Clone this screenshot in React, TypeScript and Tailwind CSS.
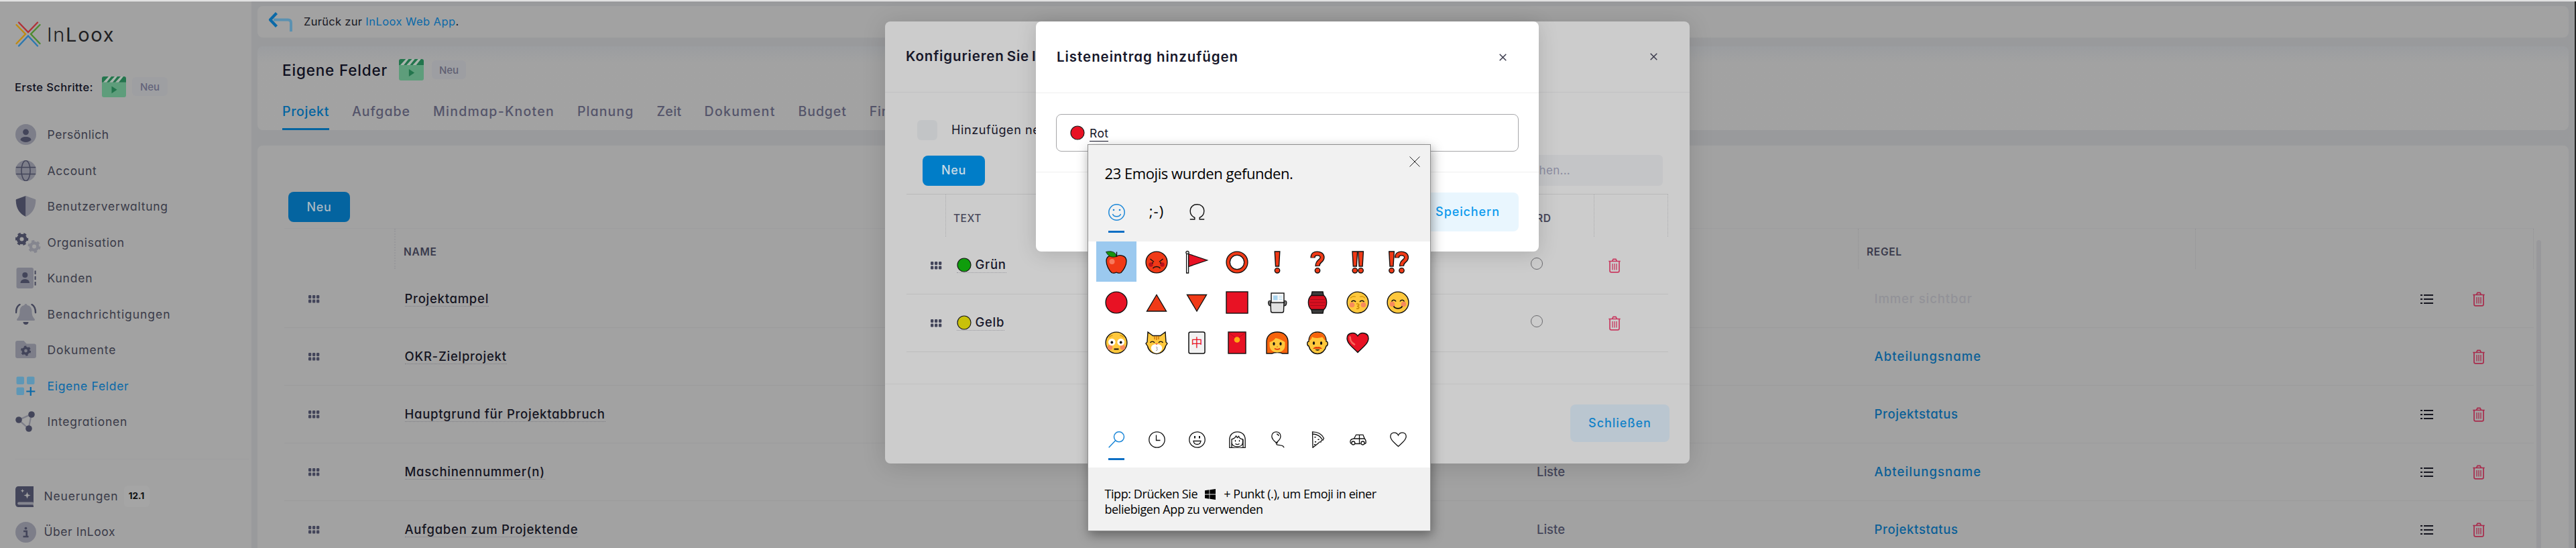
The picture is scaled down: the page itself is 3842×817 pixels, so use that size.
import type { ReactNode } from 'react';

const DARK = '#43455a';
const LIGHT = '#7d7e89';

/* ---------- Sidebar icons ---------- */

function NavIcon({ name }: { name: string }) {
  return (
    <svg width="38" height="31" viewBox="0 0 38 31" fill="none" className="shrink-0">
      {name === 'person' && (
        <>
          <circle cx="15.5" cy="15.5" r="15.5" fill={LIGHT} />
          <circle cx="15.5" cy="11.8" r="4.4" fill={DARK} />
          <path d="M7.5 23.8c0-3 3.2-4.8 8-4.8s8 1.8 8 4.8c-2 2-4.6 3.2-8 3.200s-6-1.2-8-3.200z" fill={DARK} />
        </>
      )}
      {name === 'globe' && (
        <>
          <circle cx="15.5" cy="15.5" r="15.5" fill={LIGHT} />
          <path d="M.8 10.6h29.4M.8 20.4h29.4" stroke={DARK} strokeWidth="1.5" />
          <ellipse cx="15.5" cy="15.5" rx="6.6" ry="15" stroke={DARK} strokeWidth="1.5" />
        </>
      )}
      {name === 'shield' && (
        <>
          <path d="M15.5 0L1.7 5C.8 5.4.6 6 .7 7c.3 12 5.8 20 14.8 24z" fill={DARK} />
          <path d="M15.5 0l13.800 5c.9.4 1.1 1 1 2-.3 12-5.8 20-14.8 24z" fill={LIGHT} />
        </>
      )}
      {name === 'gears' && (
        <>
          <circle cx="9.5" cy="10.5" r="5.4" stroke={DARK} strokeWidth="4.8" />
          <circle cx="9.5" cy="10.5" r="8.4" stroke={DARK} strokeWidth="2.6" strokeDasharray="4.4 4.4" strokeDashoffset="2" />
          <circle cx="28" cy="21.5" r="5.2" stroke="#85868f" strokeWidth="4.400" />
          <circle cx="28" cy="21.5" r="8.2" stroke="#85868f" strokeWidth="2.6" strokeDasharray="4.3 4.3" />
        </>
      )}
      {name === 'contacts' && (
        <>
          <rect x="1.5" y="0" width="25.5" height="31" rx="3" fill={LIGHT} />
          <circle cx="14.3" cy="11" r="4" fill={DARK} />
          <path d="M7.5 23c0-3.500 2.5-5.800 6.8-5.800S21 19.500 21 23z" fill={DARK} />
          <path d="M29.6 4.500v5.500M29.6 12.700v5.500M29.6 20.900v5.500" stroke={DARK} strokeWidth="2" />
        </>
      )}
      {name === 'bell' && (
        <>
          <path d="M15.5 0c1.3 0 2 .8 2 2 4.7.8 7 4.5 7 9 0 6 1.5 8.5 4 11.5.9 1.2.4 2.500-1 2.500h-24c-1.400 0-1.900-1.300-1-2.500 2.500-3 4-5.500 4-11.500 0-4.500 2.300-8.200 7-9 0-1.200.7-2 2-2z" fill={LIGHT} />
          <path d="M1 13C1 7.500 3 3 6.500 1M30 13c0-5.500-2-10-5.500-12" stroke={DARK} strokeWidth="2.4" strokeLinecap="round" />
          <path d="M11.500 27h8c0 2.500-1.800 4-4 4s-4-1.500-4-4z" fill={DARK} />
        </>
      )}
      {name === 'folder' && (
        <>
          <path d="M0 5c0-1.700 1.200-3 3-3h9.500l4 4.500H28c1.700 0 3 1.200 3 3V25c0 1.700-1.300 3-3 3H3c-1.800 0-3-1.300-3-3z" fill={LIGHT} />
          <circle cx="15.5" cy="17" r="4.2" stroke={DARK} strokeWidth="3.600" />
          <circle cx="15.5" cy="17" r="6.4" stroke={DARK} strokeWidth="2.400" strokeDasharray="3.35 3.35" />
        </>
      )}
      {name === 'fields' && (
        <>
          <rect x="1.5" y="1.500" width="11.5" height="11.5" rx="2" fill="#5e97b6" />
          <rect x="17" y="1.500" width="11.5" height="11.5" rx="2" fill="#5e97b6" />
          <rect x="1.5" y="17.500" width="11.5" height="11.5" rx="2" fill="#5e97b6" />
          <path d="M22.800 17v13M16.300 23.500h13" stroke="#0a69a8" strokeWidth="2.200" />
        </>
      )}
      {name === 'share' && (
        <>
          <path d="M5 13L24 4.500 19.500 26z" stroke={LIGHT} strokeWidth="2.200" />
          <circle cx="5" cy="13" r="4.800" fill={DARK} />
          <circle cx="24" cy="5" r="4.800" fill={DARK} />
          <circle cx="20" cy="26" r="4.800" fill={DARK} />
        </>
      )}
      {name === 'book' && (
        <>
          <path d="M4.500 0H27v23.500c-1 .6-1 4.500 0 5.500v2H4.500C2 31 0 29 0 26.500v-22C0 2 2 0 4.500 0z" fill={DARK} />
          <path d="M5 23.500h21v4H5c-2.500 0-2.500-4 0-4z" fill="#85868f" />
          <path d="M17.500 8.500l1.300 3.700 3.700 1.300-3.700 1.300-1.300 3.700-1.300-3.700-3.700-1.300 3.700-1.300zM10.500 4l.8 2 2 .8-2 .8-.8 2-.8-2-2-.8 2-.8z" fill="#a2a2a2" />
        </>
      )}
      {name === 'info' && (
        <>
          <circle cx="15.5" cy="15.5" r="15.5" fill={LIGHT} />
          <circle cx="15.5" cy="9.6" r="1.9" fill={DARK} />
          <path d="M12 14h4.700v8M11.500 22h8" stroke={DARK} strokeWidth="2.600" />
        </>
      )}
    </svg>
  );
}

function Clapper({ className }: { className: string }) {
  return (
    <svg viewBox="0 0 36 32" preserveAspectRatio="none" className={className}>
      <path d="M0 9h36v20a3 3 0 01-3 3H3a3 3 0 01-3-3z" fill="#5e9d7b" />
      <path d="M3 0h30a3 3 0 013 3v6H0V3a3 3 0 013-3z" fill="#23754d" />
      <path d="M10 0h4L7 9H2zM19 0h4l-7 9h-5zM28 0h4l-7 9h-5z" fill="#a9b5ad" />
      <path d="M14.500 15l8 5.500-8 5.500z" fill="#23754d" />
    </svg>
  );
}

function Handle() {
  return (
    <svg width="17" height="12" viewBox="0 0 17 12" fill="#43455a">
      {[0, 6, 12].map((x) => (
        <g key={x}>
          <rect x={x} y="0" width="4.3" height="5" rx="1.2" />
          <rect x={x} y="6.5" width="4.3" height="5" rx="1.2" />
        </g>
      ))}
    </svg>
  );
}

function Trash({ color }: { color: string }) {
  return (
    <svg width="18" height="22" viewBox="0 0 18 22" fill="none" stroke={color} strokeWidth="1.7">
      <path d="M.3 4.500h17.400M5.500 4.300l1.600-3h3.800l1.600 3" />
      <path d="M2 4.700v14c0 1.300.8 2.200 2.200 2.200h9.600c1.400 0 2.200-.9 2.200-2.200v-14" />
      <path d="M6 8v9.500M9 8v9.500M12 8v9.500" strokeWidth="1.3" />
    </svg>
  );
}

function ListIcon() {
  return (
    <svg width="19" height="16" viewBox="0 0 19 16" stroke="#15151f" strokeWidth="1.8">
      <path d="M0 2h3M0 8h3M0 14h3M5 2h14M5 8h14M5 14h14" />
    </svg>
  );
}

function CloseX() {
  return (
    <svg width="11" height="11" viewBox="0 0 11 11" stroke="#3b3b4d" strokeWidth="1.5">
      <path d="M.7.7l9.600 9.600M10.300.7L.7 10.300" />
    </svg>
  );
}

function Dot({ color }: { color: string }) {
  return (
    <svg width="22" height="22" viewBox="0 0 22 22">
      <circle cx="11" cy="11" r="10" fill={color} stroke="#1a1a1a" strokeWidth="1.2" />
    </svg>
  );
}

/* ---------- Emoji drawings ---------- */

function Bang({ x }: { x: number }) {
  return (
    <g transform={`translate(${x} 18)`} fill="#f03a17" stroke="#111" strokeWidth="1.4">
      <path d="M-3.800-16h7.600l-1.300 22h-5z" />
      <circle cy="12.3" r="3.7" />
    </g>
  );
}

function Question({ x }: { x: number }) {
  return (
    <g transform={`translate(${x} 18)`} fill="none">
      <path d="M-7-6.500C-7-11.500-4-13-.5-13S7-11.500 7-7C7-1.500-.3-2 0 6" stroke="#111" strokeWidth="7.2" />
      <path d="M-7-7.200C-7-11.500-4-13-.5-13S7-11.500 7-7C7-1.500-.3-2 0 5" stroke="#f03a17" strokeWidth="4.4" />
      <circle cy="12.3" r="3.7" fill="#f03a17" stroke="#111" strokeWidth="1.4" />
    </g>
  );
}

function Face({ fill, children }: { fill: string; children: ReactNode }) {
  return (
    <>
      <circle cx="18" cy="18" r="15.9" fill={fill} stroke="#111" strokeWidth="1.4" />
      {children}
    </>
  );
}

const emojis: ReactNode[] = [
  <>
    <path d="M18 9.500c3-2.500 14.500-3.500 15 6.500.3 6.500-4.500 14-8 17.500-2.500 1.200-4.500.8-7-.5-2.500 1.300-4.500 1.700-7 .5C7 30 3 22.500 3 16 3 6 15 7 18 9.500z" fill="#f03a17" stroke="#111" strokeWidth="1.3" />
    <path d="M2.500 2.500C9 1 17.500 1.500 18 9.500 11 11.500 6 9.500 2.500 2.500z" fill="#16930f" stroke="#111" strokeWidth=".8" />
    <path d="M18.500 9V2.500" stroke="#111" strokeWidth="1.4" />
    <circle cx="11.5" cy="17" r="4" fill="#f8795c" />
  </>,
  <Face fill="#f03a17">
    <circle cx="9.5" cy="21.500" r="3.200" fill="#b9101c" />
    <circle cx="26.5" cy="21.500" r="3.200" fill="#b9101c" />
    <path d="M8.500 13l5.500 4.500M27.500 13L22 17.500M12 18v2M24 18v2M12.500 27c2.500-3.300 8.500-3.300 11 0" stroke="#111" strokeWidth="1.5" fill="none" />
  </Face>,
  <>
    <path d="M5.500 5.500L33.500 15 5.500 24.500z" fill="#e81224" stroke="#111" strokeWidth="1.3" />
    <path d="M2.600 4v30h3V4z" fill="#fff" stroke="#111" strokeWidth="1.3" />
    <circle cx="4" cy="3.500" r="2.2" fill="#ddd" stroke="#111" strokeWidth="1.2" />
  </>,
  <>
    <circle cx="18" cy="18" r="13.3" fill="none" stroke="#111" strokeWidth="6.600" />
    <circle cx="18" cy="18" r="13.3" fill="none" stroke="#f03a17" strokeWidth="4" />
  </>,
  <Bang x={18} />,
  <Question x={18} />,
  <>
    <Bang x={13.8} />
    <Bang x={22.6} />
  </>,
  <>
    <Bang x={8.5} />
    <Question x={23.5} />
  </>,
  <circle cx="18" cy="18" r="15.9" fill="#e81224" stroke="#111" strokeWidth="1.4" />,
  <path d="M18 6.500L32.500 31h-29z" fill="#f03a17" stroke="#111" strokeWidth="1.4" />,
  <path d="M18 31L32.500 6.500h-29z" fill="#f03a17" stroke="#111" strokeWidth="1.4" />,
  <rect x="2" y="2" width="32" height="32" fill="#e81224" stroke="#111" strokeWidth="1.4" />,
  <>
    <path d="M6 15.500h24.500c2 0 2 7-1.500 7.500H7.500C4 22.500 4 15.500 6 15.500z" fill="#777" stroke="#111" strokeWidth="1.2" />
    <path d="M8 18h20l-.5 12.500c0 1.500-1 2.500-2.500 2.500H11c-1.500 0-2.500-1-2.500-2.500z" fill="#e1e1e1" stroke="#111" strokeWidth="1.4" />
    <rect x="9" y="4" width="19" height="14" fill="#f8f8f8" stroke="#111" strokeWidth="1.4" />
    <rect x="12" y="7.500" width="6.500" height="7" fill="#a9d4ee" />
    <path d="M20.500 8.500h5M20.500 11h5M20.500 13.500h5" stroke="#b6dcef" strokeWidth="1" />
    <path d="M9.500 19h17" stroke="#999" />
  </>,
  <>
    <path d="M10 2h16l1.500 8h-19zM10 34h16l1.500-8h-19z" fill="#3c3c3c" stroke="#111" strokeWidth="1.4" />
    <path d="M8.500 7.500h19c5.500 5 5.500 16 0 21h-19c-5.500-5-5.500-16 0-21z" fill="#d80f20" stroke="#111" strokeWidth="1.4" />
    <path d="M7 13.500h22M6.500 18h23M7 22.500h22" stroke="#a00c18" strokeWidth=".9" />
  </>,
  <Face fill="#ffc83d">
    <circle cx="9.5" cy="21.500" r="3.8" fill="#f78a5c" />
    <circle cx="26.5" cy="21.500" r="3.8" fill="#f78a5c" />
    <path d="M7 11.500c2-2.500 5-3 8-2M29 11.500c-2-2.500-5-3-8-2" stroke="#d69a10" strokeWidth="1.3" fill="none" />
    <path d="M8.500 17c1.500-2.500 5-2.500 6.500 0M21 17c1.500-2.500 5-2.500 6.500 0" stroke="#111" strokeWidth="1.5" fill="none" />
    <path d="M16 20c5-.5 5 3 1 3.500 4 .5 4 4-1 3.800" stroke="#c98a08" strokeWidth="1.5" fill="none" />
  </Face>,
  <Face fill="#ffc83d">
    <circle cx="9.5" cy="20.500" r="3.8" fill="#f78a5c" />
    <circle cx="26.5" cy="20.500" r="3.8" fill="#f78a5c" />
    <path d="M8.500 16.500c1.500-3 5-3 6.500 0M21 16.500c1.500-3 5-3 6.500 0M11.500 23.500c2.500 4.500 10.500 4.500 13 0" stroke="#111" strokeWidth="1.6" fill="none" />
  </Face>,
  <Face fill="#ffc83d">
    <circle cx="8.5" cy="25" r="3.8" fill="#f78a5c" />
    <circle cx="27.5" cy="25" r="3.8" fill="#f78a5c" />
    <circle cx="11.3" cy="17" r="5.3" fill="#fff" />
    <circle cx="24.7" cy="17" r="5.3" fill="#fff" />
    <circle cx="11.3" cy="17.500" r="1.9" fill="#111" />
    <circle cx="24.7" cy="17.500" r="1.9" fill="#111" />
    <path d="M14.500 27.500h7" stroke="#111" strokeWidth="2" />
    <path d="M7 10c1.500-2 3-2.800 5.500-2.800M29 10c-1.500-2-3-2.800-5.500-2.800" stroke="#d69a10" strokeWidth="1.3" fill="none" />
  </Face>,
  <>
    <path d="M5 2l7.500 5.500h11L31 2l1 15 2 2-2.500 4C30 30 24 34.500 18 34.500S6 30 4.500 23L2 19l2-2z" fill="#ffc83d" stroke="#111" strokeWidth="1.4" />
    <path d="M15 8v5M18 8v6M21 8v5" stroke="#d17a12" strokeWidth="1.6" />
    <path d="M18 20c6 0 9 3 8 7.500-1.200 3.500-4.500 6-8 6s-6.800-2.500-8-6C9 23 12 20 18 20z" fill="#fff" />
    <path d="M8.500 18c1.500-2.500 5-2.500 6.500 0M21 18c1.500-2.500 5-2.500 6.500 0" stroke="#111" strokeWidth="1.4" fill="none" />
    <path d="M16 19h4l-2 2.500z" fill="#e8604c" />
    <path d="M17 24.500c3-.3 3 2 .8 2.300 2.200.3 2.200 2.800-.8 2.700" stroke="#999" strokeWidth="1" fill="none" />
  </>,
  <>
    <rect x="6" y="2" width="24" height="32" rx="2.5" fill="#f2f2f2" stroke="#111" strokeWidth="1.5" />
    <text x="18" y="24" fontSize="17" textAnchor="middle" fill="#e81224" fontFamily="'Noto Sans CJK SC', sans-serif">中</text>
  </>,
  <>
    <rect x="5" y="2" width="26" height="32" fill="#e81224" stroke="#111" strokeWidth="1.4" />
    <path d="M5.500 3l12.500 9 12.500-9" stroke="#b80e1c" strokeWidth="1" fill="none" />
    <circle cx="18" cy="13.500" r="4.3" fill="#ffa913" />
  </>,
  <>
    <path d="M2 34V17C2 7.500 8.500 2 18 2s16 5.500 16 15v17h-8c-4-2-12-2-16 0z" fill="#f7630c" stroke="#111" strokeWidth="1.4" />
    <path d="M6.500 17c4-1 7-3 9-6 4 1 9 2.500 14 6v5c0 6.500-5.500 10.500-11.500 10.500S6.500 28.500 6.500 22z" fill="#ffc83d" />
    <ellipse cx="13" cy="19.500" rx="1.6" ry="2.6" fill="#111" />
    <ellipse cx="23" cy="19.500" rx="1.6" ry="2.6" fill="#111" />
    <path d="M14 26.500c2.500 1.800 5.500 1.800 8 0" stroke="#e03a10" strokeWidth="1.7" fill="none" />
    <path d="M17 23.800h2" stroke="#e08c20" strokeWidth="1.3" />
  </>,
  <>
    <path d="M5 16C5 7 10 2 18 2s13 5 13 14c3 0 3 6 0 7-1.500 7-7 11.500-13 11.500S6.500 30 5 23c-3-1-3-7 0-7z" fill="#ffc83d" stroke="#111" strokeWidth="1.4" />
    <path d="M5.700 15C6 7 10.500 2.700 18 2.700S30 7 30.300 15C27 13 27 10.500 25 9.500c-4 2-13 2-15-.5-1 3-1.500 4-4.300 6z" fill="#f7630c" />
    <ellipse cx="12.5" cy="18.500" rx="1.6" ry="2.6" fill="#111" />
    <ellipse cx="23.5" cy="18.500" rx="1.6" ry="2.6" fill="#111" />
    <path d="M11 27c2-2.500 5-3.500 7-2.500 2-1 5 0 7 2.500z" fill="#e0400c" />
    <path d="M14.500 28h7c-1.500 2.300-5.500 2.300-7 0z" fill="#111" />
  </>,
  <>
    <path d="M18 32.500C12 26 2 19.500 2 11.500 2 3 13.500.5 18 8c4.500-7.500 16-5 16 3.500 0 8-10 14.500-16 21z" fill="#e81224" stroke="#111" strokeWidth="1.4" />
    <path d="M6.500 9.500c0 6 3 9 6.500 11" stroke="#f9655b" strokeWidth="2.6" strokeLinecap="round" fill="none" />
  </>,
];

const categories: ReactNode[] = [
  <path d="M16 .8a7.500 7.500 0 110 15 7.500 7.500 0 010-15zM10.700 13.800L.7 24.300" stroke="#1b87d8" strokeWidth="1.5" />,
  <>
    <circle cx="12.5" cy="12.5" r="11.7" />
    <path d="M11.500 5.500v8h6" />
  </>,
  <>
    <circle cx="12.5" cy="12.5" r="11.7" />
    <path d="M9 7v3.500M16 7v3.500" strokeWidth="2" />
    <path d="M7 14.500h11c-.5 3.500-2.500 5-5.500 5S7.500 18 7 14.500z" />
  </>,
  <>
    <path d="M.8 24.300V12.500C.8 5.500 5.500.8 12.500.8s11.700 4.700 11.700 11.700v11.800h-5c-4 .8-9 .8-13.400 0z" />
    <path d="M4 12c3-.8 5.500-2.500 6.500-5l2 2.500 2-2c.8 2.500 3 4 6 4.500v4.500c0 4.500-4 6.500-8.200 6.500S4 21 4 16.500zM4 12v12M21 12v12M9.500 13v2.500M15.500 13v2.500M9.500 18.500c2 1.500 4 1.500 6 0" />
  </>,
  <path d="M10.500 17C6.500 14 3.800 11 3.800 7.200c0-8.400 13.200-8.400 13.200 0 0 3.800-2.500 6.800-6.500 9.800zM9.200 17h2.600c-3 4 2 3.500 4.700 3.800 3.500.3 5 1 5.500 3.500M11 4.200c1.800 0 2.800 1 2.800 2.800" />,
  <>
    <path d="M4.500.8c8 0 14 3.500 17 9.700l-1.500 2.700c-1.500-.7-2.500.8-3 2.800-1.800-.5-3 .5-3.500 1.500L5 24.300zM5 4c6 .5 11 3 14 8" />
    <path d="M8.500 8v1.500M9 15v1.500M13.500 11.500V13M8 19v1.500" strokeWidth="2.2" />
  </>,
  <>
    <path d="M2.500 18.500C.5 18 .8 16 1 14.500c.5-2.800 3-3.300 5.500-3.500l3-5.700h10.500l2.200 5.700c2 1.500 2 3.500 2 5.500 0 1.300-.8 2-2 2M8 18.500h8.500M5.500 11h16.500M14.500 5.300v13" />
    <circle cx="5.3" cy="17.500" r="2.5" />
    <circle cx="19.5" cy="17.500" r="2.5" />
  </>,
  <path d="M12.500 22.500C8 18 .8 13.500.8 8c0-7 9-7.800 11.700-2C15.200.2 24.200 1 24.200 8c0 5.500-7.200 10-11.700 14.500z" />,
];

/* ---------- Data ---------- */

const navItems = [
  { icon: 'person', label: 'Persönlich', cls: 'tracking-[0.55px]' },
  { icon: 'globe', label: 'Account', cls: 'tracking-[0.7px]' },
  { icon: 'shield', label: 'Benutzerverwaltung', cls: 'tracking-[0.72px]' },
  { icon: 'gears', label: 'Organisation', cls: 'tracking-[0.75px]' },
  { icon: 'contacts', label: 'Kunden', cls: 'tracking-[0.8px]' },
  { icon: 'bell', label: 'Benachrichtigungen', cls: 'tracking-[0.93px]' },
  { icon: 'folder', label: 'Dokumente', cls: 'tracking-[0.9px]' },
  { icon: 'fields', label: 'Eigene Felder', cls: 'tracking-[0.7px] text-[#0a69a8]' },
  { icon: 'share', label: 'Integrationen', cls: 'tracking-[0.75px]' },
];

const tabs = [
  { label: 'Aufgabe', cls: 'tracking-[1px]' },
  { label: 'Mindmap-Knoten', cls: 'tracking-[1.25px]' },
  { label: 'Planung', cls: 'tracking-[1.1px]' },
  { label: 'Zeit', cls: 'tracking-[0.4px]' },
  { label: 'Dokument', cls: 'tracking-[1.3px]' },
  { label: 'Budget', cls: 'tracking-[0.9px]' },
  { label: 'Finanzen', cls: 'tracking-[0.8px]' },
];

const rows = [
  { name: 'Projektampel', type: 'Liste', rule: '', list: true },
  { name: 'OKR-Zielprojekt', type: 'Liste', rule: 'Abteilungsname', list: false },
  { name: 'Hauptgrund für Projektabbruch', type: 'Liste', rule: 'Projektstatus', list: true },
  { name: 'Maschinennummer(n)', type: 'Liste', rule: 'Abteilungsname', list: true },
  { name: 'Aufgaben zum Projektende', type: 'Liste', rule: 'Projektstatus', list: true },
];

const entries = [
  { label: 'Grün', color: '#0f9d0c' },
  { label: 'Gelb', color: '#c9c10a' },
];

/* ---------- Layout ---------- */

function Sidebar() {
  return (
    <aside className="w-[375px] shrink-0 bg-[#a2a2a2] flex flex-col text-[17.5px] leading-none text-[#3a3b49] [&>*]:shrink-0">
      <div className="flex items-center gap-[9px] h-[38px] mt-[30px] pl-[23px]">
        <svg width="38" height="38" viewBox="0 0 38 38" fill="none" strokeWidth="2.3" strokeLinecap="round">
          <path d="M5 1.500l14 14.500L33 1.500" stroke="#b03138" />
          <path d="M1.500 5L15 18.800 1.500 33" stroke="#c08a10" />
          <path d="M36.500 5L23 18.800 36.500 33" stroke="#4c8a2e" />
          <path d="M5 36.500L19 21.500l14 15" stroke="#2b77b0" />
        </svg>
        <span className="text-[29px] tracking-[1.7px] text-[#1f1f22]">
          <span className="font-light">In</span>
          <span className="font-normal">Loox</span>
        </span>
      </div>

      <div className="flex items-center h-[32px] mt-[43px] pl-[22px]">
        <span className="w-[130px] pt-[2px] text-[16.5px] font-medium tracking-[0.4px] text-[#0f1020]">Erste Schritte:</span>
        <Clapper className="w-[36px] h-[31px]" />
        <span className="ml-[9px] w-[53px] h-[28px] rounded-md bg-[#9e9fa2] flex items-center justify-center text-[15px] font-medium text-[#62637a]">Neu</span>
      </div>

      <nav className="flex flex-col mt-[29px]">
        {navItems.map((item) => (
          <div key={item.label} className="flex items-center gap-[10px] h-[53.5px] pl-[22.5px]">
            <NavIcon name={item.icon} />
            <span className={item.cls}>{item.label}</span>
          </div>
        ))}
      </nav>

      <div className="h-px mt-[28px] ml-[22px] mr-1 bg-[#9d9d9f]" />

      <div className="flex items-center h-[53px] mt-[29px] pl-[22.5px]">
        <NavIcon name="book" />
        <span className="ml-[5px] tracking-[0.85px]">Neuerungen</span>
        <span className="ml-[8px] w-[38px] h-[32px] rounded-md bg-[#a5a5a5] flex items-center justify-center text-[13.5px] font-bold text-[#111]">12.1</span>
      </div>
      <div className="flex items-center h-[53px] pl-[22.5px]">
        <NavIcon name="info" />
        <span className="ml-[5px] tracking-[0.55px]">Über InLoox</span>
      </div>
    </aside>
  );
}

function FieldsTable() {
  return (
    <div className="flex mt-[9px] pl-[40px]">
      <div className="w-[3355px] border-t border-[#9d9d9f]">
        <div className="flex h-[62px] text-[15.5px] font-semibold tracking-[0.7px] leading-none text-[#3a3a4c]">
          <div className="w-[166px] h-[60px] border-r-2 border-dotted border-[#98989b]" />
          <div className="w-[2182px] h-[60px] pt-[27px] pl-[12px] border-r border-dotted border-[#939396]">NAME</div>
          <div className="w-[503px] h-[60px] pt-[27px] pl-[12px] border-r border-dotted border-[#939396]">REGEL</div>
          <div className="w-[504px] h-[60px] border-r border-dotted border-[#939396]" />
        </div>
        {rows.map((row) => (
          <div key={row.name} className="flex items-center h-[86px] pl-[36px] border-b border-[#9b9b9c] text-[18.5px] font-medium leading-none">
            <div className="w-[143.5px]"><Handle /></div>
            <div className="w-[1688.5px] text-[#14141f] tracking-[0.74px]">
              <span className="border-b border-dotted border-[#7d7d84]">{row.name}</span>
            </div>
            <div className="w-[503.5px] text-[#45465a]">{row.type}</div>
            <div className="w-[814.5px]">
              {row.rule === '' && <span className="tracking-[0.9px] text-[#929298]">Immer sichtbar</span>}
              {row.rule === 'Abteilungsname' && <span className="tracking-[1.1px] text-[#0a5f97]">{row.rule}</span>}
              {row.rule === 'Projektstatus' && <span className="tracking-[0.65px] text-[#0a5f97]">{row.rule}</span>}
            </div>
            <div className="w-[78px]">{row.list && <ListIcon />}</div>
            <Trash color="#a82b4c" />
          </div>
        ))}
      </div>
      <div className="ml-[4px] mt-[18px] w-[7px] rounded-t bg-[#98989b]" />
    </div>
  );
}

function Main() {
  return (
    <main className="flex-1 min-h-0 flex flex-col bg-[#999a9c] pl-[9px] pr-[9px] leading-none">
      <div className="mt-[7px] h-[47px] shrink-0 rounded-lg bg-[#a2a2a2] flex items-center pl-[16px] text-[16.5px] text-[#17171f]">
        <svg width="37" height="30" viewBox="0 0 37 30" fill="none">
          <path d="M8 11.500h21.500c3 0 4.500 1.500 4.500 4.500v13" stroke="#5b91b0" strokeWidth="4" />
          <path d="M12.500 1.500L3 11.500l9.500 10" stroke="#0a69a8" strokeWidth="4.2" strokeLinejoin="round" />
        </svg>
        <span className="ml-[16px] tracking-[0.3px]">Zurück zur</span>
        <span className="ml-[5px] tracking-[0.45px] text-[#0a69a8]">InLoox Web App</span>
        <span>.</span>
      </div>

      <div className="mt-[13px] h-[125px] shrink-0 rounded-lg bg-linear-to-b from-[#9b9da0] to-[#a2a2a2] to-20% flex flex-col justify-between pl-[37px]">
        <div className="flex items-center pt-[19px]">
          <h1 className="w-[174px] pt-[2px] text-[22.5px] font-medium tracking-[0.82px] text-[#0f1020]">Eigene Felder</h1>
          <Clapper className="w-[37px] h-[32px]" />
          <span className="ml-[12px] w-[51px] h-[28px] rounded-md bg-[#9d9ea2] flex items-center justify-center text-[15px] font-medium text-[#5f6072]">Neu</span>
        </div>
        <div className="flex gap-[34px] text-[19.5px] font-medium text-[#54546a]">
          <span className="h-[37px] border-b-3 border-[#0464a0] text-[#0464a0] tracking-[0.65px]">Projekt</span>
          {tabs.map((tab) => (
            <span key={tab.label} className={tab.cls}>{tab.label}</span>
          ))}
        </div>
      </div>

      <div className="mt-[23px] flex-1 min-h-0 overflow-hidden rounded-t-lg bg-[#a2a2a2] pt-[69px]">
        <button className="ml-[46px] w-[92px] h-[45px] rounded-lg bg-[#0464a0] text-[18px] font-medium tracking-[0.7px] text-[#a9b8c2] block">Neu</button>
        <FieldsTable />
      </div>
    </main>
  );
}

function ConfigDialog() {
  return (
    <div className="absolute left-[1320px] top-[32px] w-[1200px] h-[659px] rounded-lg bg-[#cccccc] shadow-[0_4px_36px_rgba(0,0,0,0.14)] flex flex-col leading-none text-[#17172a]">
      <div className="h-[106px] shrink-0 border-b border-[#c2c2c3] flex items-center justify-between pl-[31px] pr-[48px]">
        <h2 className="text-[20.5px] font-semibold tracking-[0.85px] [word-spacing:-2px]">Konfigurieren Sie I</h2>
        <CloseX />
      </div>
      <div className="flex items-center h-[30px] mt-[41px] pl-[48px]">
        <div className="w-[30px] h-[30px] rounded-md bg-[#c2c4c6]" />
        <span className="ml-[21px] text-[18px] tracking-[0.6px]">Hinzufügen neuer</span>
      </div>
      <div className="flex items-center justify-between mt-[22px] pl-[56px] pr-[40px] h-[46px]">
        <button className="w-[93px] h-[45px] rounded-lg bg-[#007dc8] text-[18px] font-medium tracking-[0.7px] text-[#c9dbe6]">Neu</button>
        <div className="w-[260px] h-[46px] rounded-md bg-[#c4c5c7] flex items-center pl-[44px] text-[17px] tracking-[0.3px] text-[#8b8ca0]">
          <span>Suchen...</span>
        </div>
      </div>
      <div className="mx-[32px] mt-[12px] border-t border-[#b9b9ba]">
        <div className="flex h-[63px] text-[15.5px] font-medium tracking-[0.5px] text-[#48485a]">
          <div className="w-[59px] border-r border-dotted border-[#acacae]" />
          <div className="w-[810px] pt-[28px] pl-[11px]">TEXT</div>
          <div className="w-[158px] pt-[28px] pl-[4px] border-r border-dotted border-[#acacae] font-semibold">STANDARD</div>
          <div className="w-[110px] border-r border-dotted border-[#acacae]" />
        </div>
        {entries.map((entry) => (
          <div key={entry.label} className="flex items-center h-[86px] pl-[36px] border-b border-[#bdbdbe]">
            <div className="w-[38.5px]"><Handle /></div>
            <div className="w-[856.5px]">
              <span className="inline-flex items-center gap-[6px] border-b border-dotted border-[#9b9ba1] text-[18.5px] font-medium tracking-[0.7px]">
                <Dot color={entry.color} />
                {entry.label}
              </span>
            </div>
            <div className="w-[116px] pb-[6px]">
              <div className="w-[18px] h-[18px] rounded-full border-[1.5px] border-[#6a6a6e]" />
            </div>
            <Trash color="#c83a60" />
          </div>
        ))}
      </div>
      <div className="mt-[47px] flex-1 border-t border-[#c1c1c2] flex justify-end pt-[30px] pr-[30px]">
        <button className="w-[148px] h-[56px] rounded-lg bg-[#bac6d0] text-[18px] font-medium tracking-[0.95px] text-[#1382c8]">Schließen</button>
      </div>
    </div>
  );
}

function EntryDialog() {
  return (
    <div className="absolute left-[1545px] top-[32px] w-[750px] h-[343px] rounded-lg bg-white shadow-[0_4px_30px_rgba(0,0,0,0.15)] flex flex-col leading-none text-[#17172a]">
      <div className="h-[107px] shrink-0 border-b border-[#efefef] flex items-center justify-between pl-[31px] pr-[48px]">
        <h2 className="text-[20.5px] font-semibold tracking-[0.95px]">Listeneintrag hinzufügen</h2>
        <CloseX />
      </div>
      <div className="mx-[30px] mt-[31px] h-[56px] rounded-lg border border-[#a6a6a9] flex items-center pl-[20px] text-[17.5px]">
        <Dot color="#e81224" />
        <span className="ml-[7px] pt-[5px] pb-[2px] border-b-[1.5px] border-[#17172a] tracking-[0.4px]">Rot</span>
      </div>
      <div className="mt-[30px] flex-1 border-t border-[#efefef] flex justify-end pt-[30px] pr-[30px]">
        <button className="w-[152px] h-[58px] rounded-lg bg-[#e9f6fe] text-[18px] font-medium tracking-[0.9px] text-[#0d9bee]">Speichern</button>
      </div>
    </div>
  );
}

function EmojiPicker() {
  return (
    <div className="absolute left-[1622px] top-[215px] w-[512px] h-[577px] border border-[#8e8e8e] bg-white shadow-[2px_6px_16px_rgba(0,0,0,0.38)] flex flex-col font-['Open_Sans'] leading-none text-black">
      <div className="h-[144px] shrink-0 bg-[#f1f1f1]">
        <div className="flex justify-between pl-[24.5px] pr-[15px]">
          <h3 className="mt-[31px] text-[22px] tracking-[-0.44px]">23 Emojis wurden gefunden.</h3>
          <svg width="16" height="16" viewBox="0 0 16 16" stroke="#222" strokeWidth="1" className="mt-[17px]">
            <path d="M.5.5l15 15M15.500.5l-15 15" />
          </svg>
        </div>
        <div className="flex pl-[12px] mt-[35px]">
          <div className="w-[60px] flex flex-col items-center gap-[15px]">
            <svg width="25" height="25" viewBox="0 0 25 25" fill="none" stroke="#1b87d8" strokeWidth="1.5">
              <circle cx="12.5" cy="12.5" r="11.7" />
              <path d="M6.500 15c1.500 5 10.500 5 12 0" />
              <circle cx="8" cy="9" r="1.3" fill="#1b87d8" stroke="none" />
              <circle cx="17" cy="9" r="1.3" fill="#1b87d8" stroke="none" />
            </svg>
            <div className="w-[24px] h-[3px] bg-[#0d6fc4]" />
          </div>
          <div className="w-[60px] text-center text-[22px] leading-[20px] tracking-[1px]">;-)</div>
          <div className="w-[60px] flex justify-center">
            <svg width="23" height="24" viewBox="0 0 23 24" fill="none" stroke="#111" strokeWidth="1.4">
              <path d="M.8 23h7v-2.500C3.500 18.500 1.200 14.500 1.200 10.500 1.200 4.500 5.500.8 11.500.8s10.300 3.700 10.300 9.700c0 4-2.300 8-6.600 10V23h7" />
            </svg>
          </div>
        </div>
      </div>

      <div className="grid grid-cols-[repeat(8,60px)] auto-rows-[60px] pl-[12px]">
        {emojis.map((drawing, i) => (
          <div key={i} className={i === 0 ? 'flex items-center justify-center pt-px bg-[#9bc9ef]' : 'flex items-center justify-center pt-px'}>
            <svg width="36" height="36" viewBox="0 0 36 36">{drawing}</svg>
          </div>
        ))}
      </div>

      <div className="flex-1 flex items-end pl-[12px] pb-[11px]">
        {categories.map((drawing, i) => (
          <div key={i} className="w-[60px] flex flex-col items-center gap-[15px]">
            <svg width="25" height="25" viewBox="0 0 25 25" fill="none" stroke="#111" strokeWidth="1.3">{drawing}</svg>
            <div className={i === 0 ? 'w-[24px] h-[3px] bg-[#0d6fc4]' : 'w-[24px] h-[3px]'} />
          </div>
        ))}
      </div>

      <div className="h-[94px] shrink-0 bg-[#f1f1f1] pl-[24.5px] pt-[28px] text-[18px] leading-[23px] tracking-[-0.42px]">
        <p className="flex items-center">
          Tipp: Drücken Sie
          <svg width="16" height="16" viewBox="0 0 16 16" className="ml-[11px] mr-[12px]">
            <path d="M0 2.200l6.500-.9v6.300H0zM7.300 1.200L16 0v7.600H7.300zM0 8.400h6.500v6.300L0 13.800zM7.300 8.400H16V16l-8.700-1.200z" />
          </svg>
          + Punkt (.), um Emoji in einer
        </p>
        <p>beliebigen App zu verwenden</p>
      </div>
    </div>
  );
}

export default function App() {
  return (
    <div className="relative w-[3842px] h-[817px] overflow-hidden flex flex-col bg-[#a2a2a2] font-['Inter'] [font-feature-settings:'cv11']">
      <div className="h-[2px] shrink-0 bg-white border-t border-[#cfcfcf]" />
      <div className="flex-1 flex min-h-0 border-r-2 border-[#242424]">
        <Sidebar />
        <Main />
      </div>
      <ConfigDialog />
      <EntryDialog />
      <EmojiPicker />
    </div>
  );
}
